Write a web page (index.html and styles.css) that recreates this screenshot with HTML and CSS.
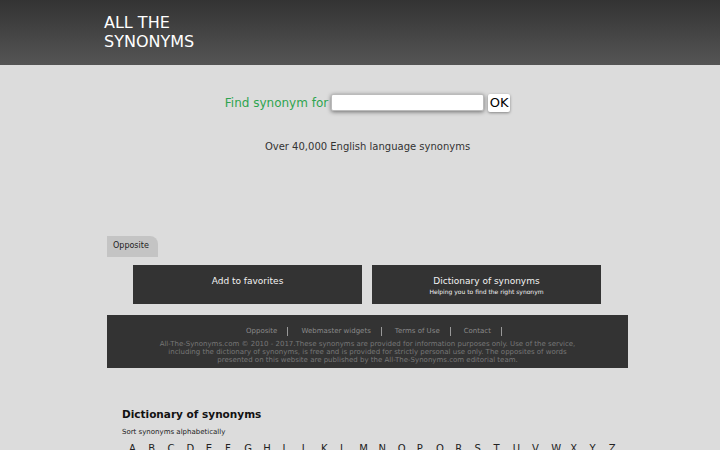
FILE: index.html
```html
<!DOCTYPE html>
<html>
<head>
<meta charset="utf-8">
<link rel="stylesheet" href="styles.css">
</head>
<body>
<header class="top">
  <div class="brand">ALL THE<br>SYNONYMS</div>
</header>
<main class="wrap">
  <form class="search">
    <label class="search-label">Find synonym for</label>
    <input class="search-input" type="text">
    <button class="search-btn" type="button">OK</button>
  </form>
  <p class="tagline">Over 40,000 English language synonyms</p>
  <div class="tabs"><span class="tab">Opposite</span></div>
  <div class="cards">
    <div class="card"><div class="card-title">Add to favorites</div></div>
    <div class="card"><div class="card-title">Dictionary of synonyms</div><div class="card-sub">Helping you to find the right synonym</div></div>
  </div>
  <footer class="foot">
    <nav class="foot-links">
      <a>Opposite</a><a>Webmaster widgets</a><a>Terms of Use</a><a>Contact</a>
    </nav>
    <p class="foot-text">All-The-Synonyms.com © 2010 - 2017.These synonyms are provided for information purposes only. Use of the service,<br>including the dictionary of synonyms, is free and is provided for strictly personal use only. The opposites of words<br>presented on this website are published by the All-The-Synonyms.com editorial team.</p>
  </footer>
  <section class="dict">
    <h2 class="dict-title">Dictionary of synonyms</h2>
    <p class="dict-sub">Sort synonyms alphabetically</p>
    <div class="letters">
      <a>A</a><a>B</a><a>C</a><a>D</a><a>E</a><a>F</a><a>G</a><a>H</a><a>I</a><a>J</a><a>K</a><a>L</a><a>M</a><a>N</a><a>O</a><a>P</a><a>Q</a><a>R</a><a>S</a><a>T</a><a>U</a><a>V</a><a>W</a><a>X</a><a>Y</a><a>Z</a>
    </div>
  </section>
</main>
</body>
</html>
```
FILE: styles.css
```css
html, body { margin: 0; padding: 0; }
body {
  background: #dcdcdc;
  font-family: "DejaVu Sans", Verdana, sans-serif;
  color: #333;
}
.top {
  height: 65px;
  background: linear-gradient(#333333, #555555);
  box-sizing: border-box;
  padding: 13px 0 0 104px;
}
.brand {
  color: #fff;
  font-size: 16px;
  line-height: 19px;
}
.wrap {
  width: 521px;
  margin-left: 107px;
}
.search {
  display: flex;
  justify-content: center;
  align-items: center;
  margin: 29px 0 0;
  height: 17px;
}
.search-label {
  color: #2ea44f;
  font-size: 12px;
  margin-right: 3px;
}
.search-input {
  width: 153px;
  height: 17px;
  box-sizing: border-box;
  border: 1px solid #bbb;
  border-radius: 2px;
  background: #fff;
  box-shadow: 0 1px 4px rgba(0,0,0,0.5);
  margin: 0 4px 0 0;
  padding: 0;
}
.search-btn {
  height: 18px;
  width: 22px;
  padding: 0;
  border: none;
  border-radius: 2px;
  background: #fff;
  box-shadow: 0 1px 3px rgba(0,0,0,0.4);
  font-family: "DejaVu Sans", sans-serif;
  font-size: 13px;
  color: #000;
}
.tagline {
  text-align: center;
  font-size: 10px;
  margin: 29px 0 0;
  line-height: 14px;
}
.tabs {
  margin-top: 79px;
  height: 21px;
}
.tab {
  display: inline-block;
  width: 51px;
  height: 21px;
  box-sizing: border-box;
  background: #c4c4c4;
  border-top-right-radius: 8px;
  font-size: 8px;
  line-height: 19px;
  padding-left: 6px;
  color: #222;
}
.cards {
  display: flex;
  justify-content: center;
  gap: 10px;
  margin-top: 11px;
  padding-right: 1px;
}
.card {
  width: 229px;
  height: 39px;
  background: #333;
  color: #f2f2f2;
  text-align: center;
  box-sizing: border-box;
  padding-top: 10px;
}
.card-title { font-size: 9px; line-height: 12px; }
.card-sub { font-size: 6px; line-height: 9px; }
.foot {
  margin-top: 11px;
  background: #333;
  height: 53px;
  box-sizing: border-box;
  padding-top: 12px;
  text-align: center;
}
.foot-links {
  display: flex;
  justify-content: center;
  font-size: 7px;
  line-height: 9px;
}
.foot-links a {
  color: #8a8a8a;
  padding: 0 10px 0 13px;
  border-right: 1px solid #999;
}
.foot-text {
  margin: 4px 0 0;
  font-size: 7px;
  line-height: 8px;
  color: #777;
}
.dict {
  padding: 39px 0 0 15px;
}
.dict-title {
  margin: 0;
  font-size: 10.5px;
  line-height: 14px;
  color: #111;
}
.dict-sub {
  margin: 7px 0 0;
  font-size: 7px;
  line-height: 9px;
  color: #222;
}
.letters {
  display: flex;
  gap: 0;
  margin-top: 6px;
  padding-left: 7px;
  font-size: 10px;
}
.letters a {
  width: 19.7px;
  color: #222;
}
```
